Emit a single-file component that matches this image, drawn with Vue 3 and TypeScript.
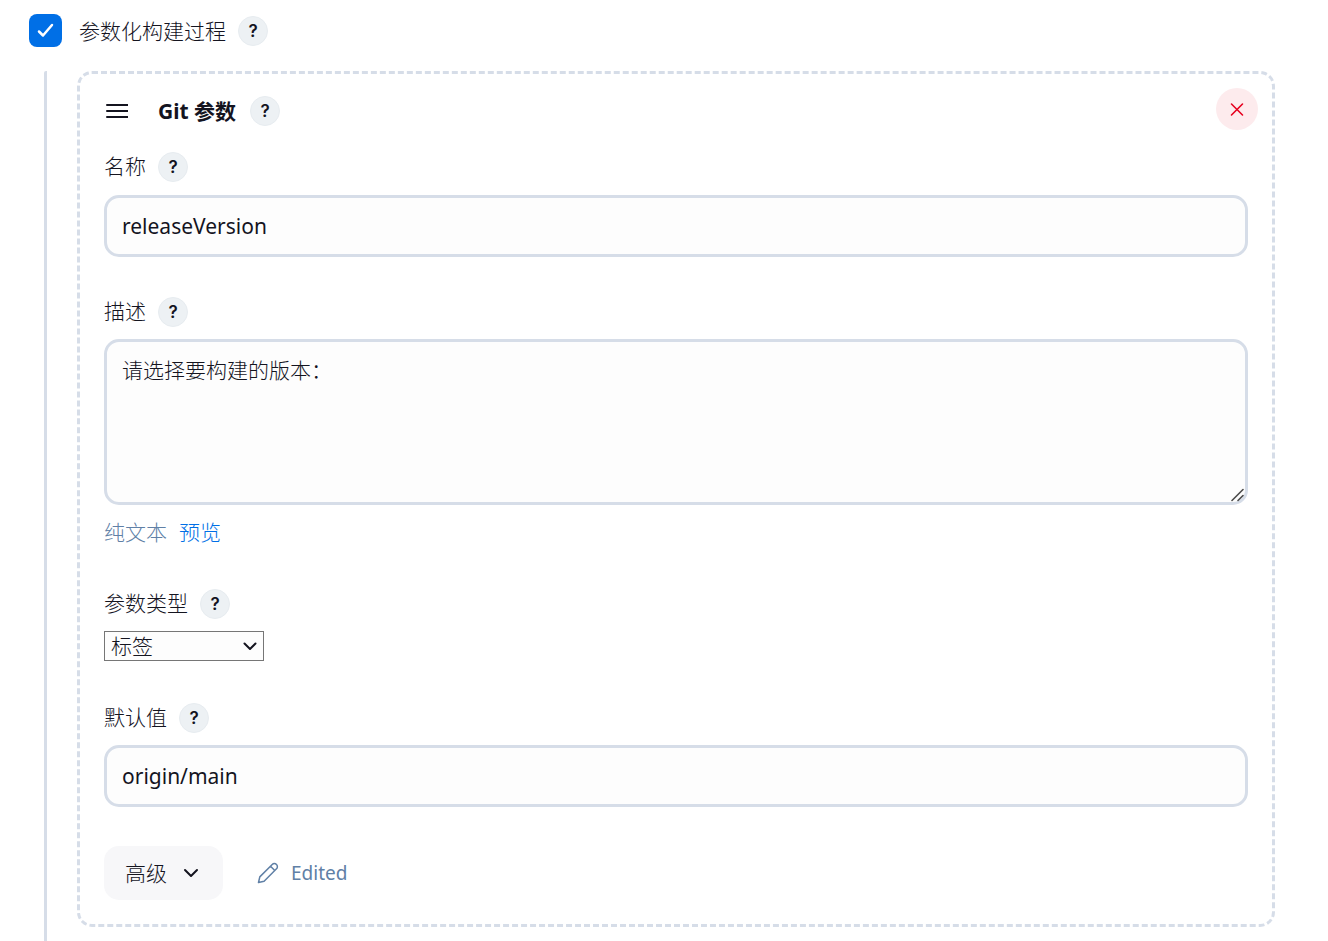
<script setup lang="ts">
import { ref } from 'vue'

const parameterized = ref(true)
const name = ref('releaseVersion')
const description = ref('请选择要构建的版本：')
const parameterType = ref('标签')
const defaultValue = ref('origin/main')
</script>

<template>
  <main class="config">
    <div class="toggle-row">
      <input id="parameterized" v-model="parameterized" class="toggle" type="checkbox" />
      <svg class="tick" viewBox="0 0 33 33" aria-hidden="true"><path d="M10 17.5l4 4 9-10.5" /></svg>
      <label for="parameterized" class="toggle-label">参数化构建过程</label>
      <button class="help" type="button">?</button>
    </div>

    <div class="nested">
      <section class="card">
        <button class="remove" type="button" aria-label="删除">
          <svg viewBox="0 0 42 42" aria-hidden="true"><path d="M15.5 16l11 11M26.500 16L15.5 27" /></svg>
        </button>

        <header class="head">
          <svg class="grip" viewBox="0 0 24 30" aria-hidden="true"><path d="M3 9h21M3 15h21M3 21h21" /></svg>
          <h2 class="title">Git 参数</h2>
          <button class="help" type="button">?</button>
        </header>

        <div class="field">
          <div class="label-row">
            <label for="name">名称</label>
            <button class="help" type="button">?</button>
          </div>
          <input id="name" v-model="name" class="box latin" type="text" />
        </div>

        <div class="field">
          <div class="label-row">
            <label for="description">描述</label>
            <button class="help" type="button">?</button>
          </div>
          <div class="area">
            <textarea id="description" v-model="description" class="box tall" spellcheck="false"></textarea>
            <svg class="resize" viewBox="0 0 14 14" aria-hidden="true"><path d="M1 12.5L12 1.5M7 12.5L12 7.5" /></svg>
          </div>
          <div class="format">
            <span>纯文本</span>
            <a href="#">预览</a>
          </div>
        </div>

        <div class="field">
          <div class="label-row">
            <label for="type">参数类型</label>
            <button class="help" type="button">?</button>
          </div>
          <div class="picker">
            <select id="type" v-model="parameterType">
              <option>标签</option>
            </select>
            <svg class="arrow" viewBox="0 0 16 16" aria-hidden="true"><path d="M2.500 5.500l5.500 5.500 5.500-5.500" /></svg>
          </div>
        </div>

        <div class="field">
          <div class="label-row">
            <label for="default">默认值</label>
            <button class="help" type="button">?</button>
          </div>
          <input id="default" v-model="defaultValue" class="box latin" type="text" />
        </div>

        <footer class="foot">
          <button class="advanced" type="button">
            高级
            <svg viewBox="0 0 16 16" aria-hidden="true"><path d="M2 5l6 6 6-6" /></svg>
          </button>
          <span class="edited">
            <svg viewBox="0 0 22 22" aria-hidden="true">
              <path d="M1.5 20.5l1.3-5.6L15.2 2.5a3 3 0 0 1 4.3 4.3L7.1 19.2zM13.500 4.200L17.800 8.500" />
            </svg>
            Edited
          </span>
        </footer>
      </section>
    </div>
  </main>
</template>

<style>
body {
  margin: 0;
  background: #fff;
}
</style>

<style scoped>
.config,
.config * {
  box-sizing: border-box;
}

.config {
  padding: 14px 53px 0 29px;
  color: #14141f;
  font-family: "Noto Sans", "Noto Sans CJK SC", sans-serif;
  font-size: 21px;
  font-weight: 300;
  line-height: 30px;
}

button,
input,
textarea,
select {
  margin: 0;
  color: inherit;
  font: inherit;
}

svg {
  fill: none;
  stroke: currentColor;
  stroke-linecap: round;
  stroke-linejoin: round;
  stroke-width: 2;
}

.toggle-row {
  position: relative;
  display: flex;
  align-items: center;
  height: 33px;
}

.toggle {
  width: 33px;
  height: 33px;
  appearance: none;
  border-radius: 8px;
  background: #006fe6;
}

.tick {
  position: absolute;
  left: 0;
  top: 0;
  width: 33px;
  height: 33px;
  color: #fff;
  stroke-width: 2.5;
  pointer-events: none;
}

.toggle-label {
  margin: 0 12px 0 17px;
}

.help {
  flex: none;
  width: 30px;
  height: 30px;
  padding: 0;
  border: 1px solid #e7ecf0;
  border-radius: 50%;
  background: #edf1f4;
  font-family: Inter, sans-serif;
  font-size: 17px;
  font-weight: 600;
  line-height: 28px;
  text-align: center;
}

.nested {
  margin: 24px 0 0 15px;
  padding: 0 0 15px 30px;
  border-left: 3px solid #d6dde8;
  border-top-left-radius: 2px;
}

.card {
  position: relative;
  padding: 22px 24px 24px;
  border: 3px dashed #d6dde8;
  border-radius: 15px;
}

.remove {
  position: absolute;
  top: 14px;
  right: 14px;
  width: 42px;
  height: 42px;
  padding: 0;
  border: 0;
  border-radius: 50%;
  background: #fdebed;
  color: #e6001f;
}

.remove svg {
  display: block;
  stroke-width: 1.6;
}

.head {
  display: flex;
  align-items: center;
  margin-bottom: 26px;
}

.grip {
  width: 24px;
  height: 30px;
  margin: 0 30px 0 0;
}

.title {
  margin: 0 14px 0 0;
  font-size: 21px;
  font-weight: 700;
  line-height: 30px;
}

.field {
  margin-bottom: 40px;
}

.field:last-of-type {
  margin-bottom: 39px;
}

.label-row {
  display: flex;
  align-items: flex-start;
  gap: 12px;
  margin-bottom: 12px;
  line-height: 28px;
}

.head + .field .label-row {
  margin-bottom: 13px;
}

.box {
  display: block;
  width: 100%;
  height: 62px;
  padding: 0 15px;
  border: 3px solid #d6dde8;
  border-radius: 15px;
  outline: 0;
  background: #fdfdfd;
}

.latin {
  font-weight: 400;
}

.area {
  position: relative;
}

.tall {
  height: 166px;
  padding: 13px 15px;
  resize: none;
}

.resize {
  position: absolute;
  right: 3px;
  bottom: 3px;
  width: 14px;
  height: 14px;
  color: #4c4c4c;
  stroke-width: 1.6;
}

.format {
  display: flex;
  gap: 12px;
  height: 32px;
  margin-top: 12px;
  color: #6080a6;
}

.format a {
  color: #006fe6;
  text-decoration: none;
}

.picker {
  position: relative;
  width: 160px;
  margin-bottom: 42px;
}

.picker select {
  display: block;
  width: 100%;
  height: 30px;
  padding: 0 6px;
  border: 1px solid #767676;
  border-radius: 0;
  appearance: none;
  background: #fdfdfd;
  line-height: 28px;
}

.arrow {
  position: absolute;
  top: 7px;
  right: 6px;
  width: 16px;
  height: 16px;
  pointer-events: none;
}

.foot {
  display: flex;
  align-items: center;
  gap: 34px;
}

.advanced {
  display: flex;
  align-items: center;
  gap: 16px;
  height: 54px;
  padding: 0 24px 0 21px;
  border: 0;
  border-radius: 15px;
  background: #f7f7f9;
}

.advanced svg {
  width: 16px;
  height: 16px;
}

.edited {
  display: flex;
  align-items: center;
  gap: 12px;
  color: #6080a6;
  font-size: 19px;
  font-weight: 400;
}

.edited svg {
  width: 22px;
  height: 22px;
  stroke-width: 1.5;
}
</style>
